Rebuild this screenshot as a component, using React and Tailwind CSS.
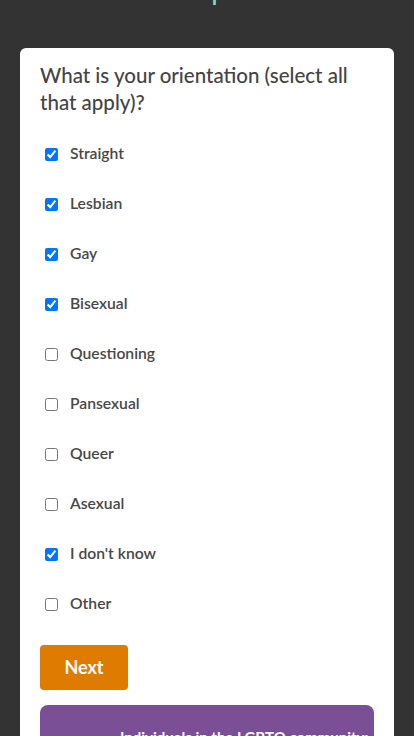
import { useState } from 'react';

const OPTIONS = [
  { label: 'Straight', checked: true },
  { label: 'Lesbian', checked: true },
  { label: 'Gay', checked: true },
  { label: 'Bisexual', checked: true },
  { label: 'Questioning', checked: false },
  { label: 'Pansexual', checked: false },
  { label: 'Queer', checked: false },
  { label: 'Asexual', checked: false },
  { label: "I don't know", checked: true },
  { label: 'Other', checked: false },
];

const App = () => {
  const [values, setValues] = useState(OPTIONS.map((o) => o.checked));

  const toggle = (i) => {
    setValues((prev) => prev.map((v, idx) => (idx === i ? !v : v)));
  };

  return (
    <div
      className="min-h-[736px] bg-[#333333] overflow-hidden"
      style={{ fontFamily: 'Lato, "Open Sans", sans-serif' }}
    >
      {/* step heading, mostly scrolled off the top */}
      <div className="h-[48px] flex justify-center overflow-hidden">
        <span className="text-[28px] leading-none text-[#7fe0c8] -mt-[25px] ml-[24px]">p</span>
      </div>

      <div className="mx-[20px] bg-white rounded-[6px] px-[20px] pt-[14px] pb-[15px]">
        <h2 className="text-[20.5px] leading-[27px] text-[#444444] font-medium">
          What is your orientation (select all that apply)?
        </h2>

        <div className="mt-[13px] flex flex-col">
          {OPTIONS.map((o, i) => (
            <label key={o.label} className="h-[50px] flex items-center cursor-pointer">
              <input
                type="checkbox"
                checked={values[i]}
                onChange={() => toggle(i)}
                className="w-[13px] h-[13px] ml-[5px] mr-[3px]"
              />
              <span className="ml-[9px] text-[15.7px] font-semibold text-[#484848]">{o.label}</span>
            </label>
          ))}
        </div>

        <button className="mt-[16px] w-[88px] h-[45px] rounded-[4px] bg-[#df7b00] text-white text-[18px] font-bold">
          Next
        </button>

        <div className="mt-[15px] bg-[#7b4f96] rounded-[8px] pt-[22px] pb-[16px] pl-[80px] pr-[10px] text-white text-[15px] font-bold leading-[20px] whitespace-nowrap">
          Individuals in the LGBTQ community:
        </div>
      </div>
    </div>
  );
};

export default App;
